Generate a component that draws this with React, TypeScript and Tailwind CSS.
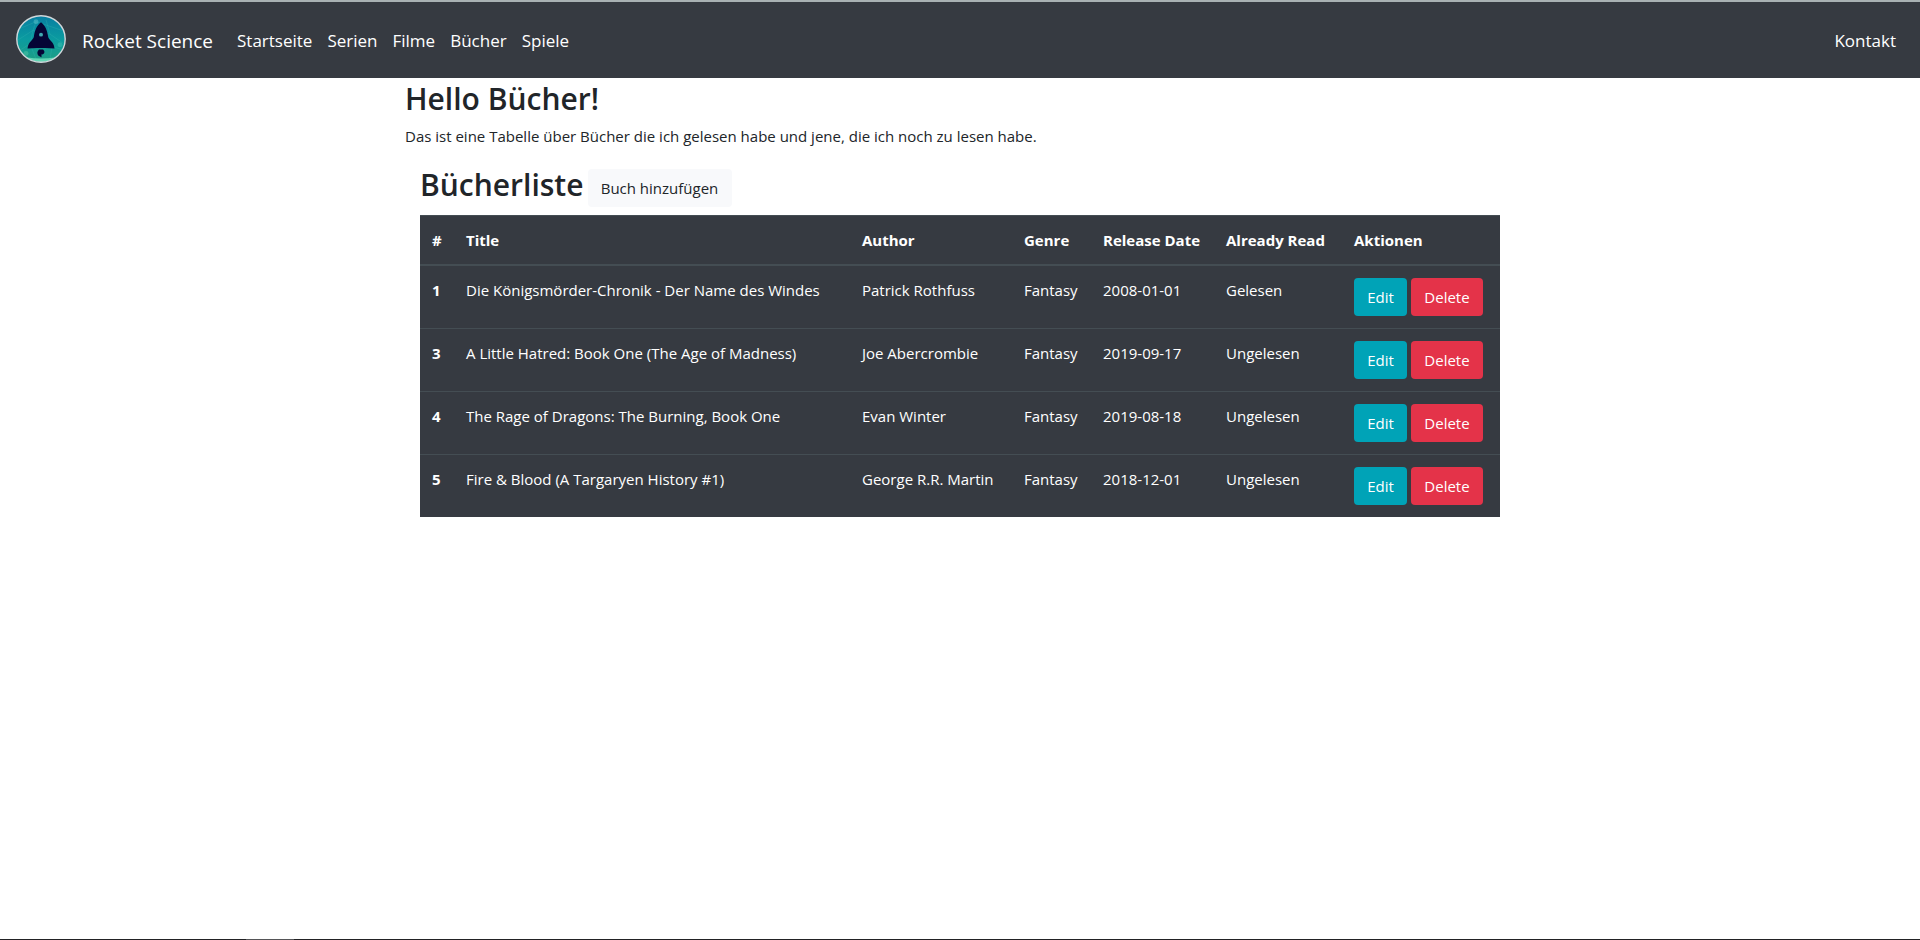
type Book = {
  id: number;
  title: string;
  author: string;
  genre: string;
  released: string;
  status: string;
};

const books: Book[] = [
  { id: 1, title: 'Die Königsmörder-Chronik - Der Name des Windes', author: 'Patrick Rothfuss', genre: 'Fantasy', released: '2008-01-01', status: 'Gelesen' },
  { id: 3, title: 'A Little Hatred: Book One (The Age of Madness)', author: 'Joe Abercrombie', genre: 'Fantasy', released: '2019-09-17', status: 'Ungelesen' },
  { id: 4, title: 'The Rage of Dragons: The Burning, Book One', author: 'Evan Winter', genre: 'Fantasy', released: '2019-08-18', status: 'Ungelesen' },
  { id: 5, title: 'Fire & Blood (A Targaryen History #1)', author: 'George R.R. Martin', genre: 'Fantasy', released: '2018-12-01', status: 'Ungelesen' },
];

const navItems = ['Startseite', 'Serien', 'Filme', 'Bücher', 'Spiele'];

function RocketLogo() {
  return (
    <svg viewBox="0 0 50 50" preserveAspectRatio="none" className="mb-1 h-12 w-[50px]" aria-hidden="true">
      <defs>
        <linearGradient id="sky" x1="0" y1="0" x2="0" y2="1">
          <stop offset="0" stopColor="#087ea2" />
          <stop offset="0.5" stopColor="#0b9ba0" />
          <stop offset="1" stopColor="#1e9f83" />
        </linearGradient>
      </defs>
      <circle cx="25" cy="25" r="24" fill="url(#sky)" />
      <g stroke="#35b5b0" strokeWidth="0.7" opacity="0.45" fill="none">
        <path d="M4 14 L20 7 L46 16 M2 26 L17 16 L34 20 L48 30 M5 36 L14 30 L36 33 L46 36 M20 7 L17 16 L14 30 L20 46 M34 20 L30 5 M36 33 L34 46" />
      </g>
      <circle cx="20" cy="7" r="2.5" fill="#4db9c6" opacity="0.6" />
      <circle cx="10" cy="40" r="2.5" fill="#57c5a8" opacity="0.5" />
      <circle cx="44" cy="31" r="2.5" fill="#3cc0b4" opacity="0.5" />
      <path d="M10 44 Q25 46.5 40 44 Q33 49 25 49 Q17 49 10 44 Z" fill="#62d6b4" />
      <circle cx="25" cy="25" r="24.2" fill="none" stroke="#cfd8dc" strokeWidth="1.4" />
      <path
        d="M25 7.5 C21 10.5 18.5 16.5 18 22 C17.8 24 17 25 15.5 26.5 C13 29 12 31 11.5 35 L21 34.5 H29 L38.5 35 C38 31 37 29 34.5 26.5 C33 25 32.2 24 32 22 C31.5 16.5 29 10.5 25 7.5 Z"
        fill="#050535"
      />
      <circle cx="25" cy="20.5" r="2" fill="#3fa9b0" />
      <path d="M23 36 C21 37.5 20.8 41 22.5 42.5 L25.5 44 L25.5 41 C28.5 41.5 29.5 38 27 36 Z" fill="#050535" />
    </svg>
  );
}

function Navbar() {
  return (
    <nav className="flex h-[78px] items-center border-t-2 border-[#a9b1b3] bg-[#363a41] px-4 pt-0.5 text-[17px] leading-6 text-white">
      <a href="#start" className="mr-6 flex items-center gap-4 text-[19px]">
        <RocketLogo />
        Rocket Science
      </a>
      <ul className="flex grow items-center gap-[15px]">
        {navItems.map((item) => (
          <li key={item}>
            <a href={'#' + item} className="block py-2">{item}</a>
          </li>
        ))}
      </ul>
      <a href="#kontakt" className="p-2">Kontakt</a>
    </nav>
  );
}

function BookTable() {
  return (
    <table className="w-full table-fixed border-separate border-spacing-0 bg-[#363a41] text-left text-white">
      <colgroup>
        <col className="w-[34px]" />
        <col />
        <col className="w-[162px]" />
        <col className="w-[79px]" />
        <col className="w-[123px]" />
        <col className="w-[128px]" />
        <col className="w-[158px]" />
      </colgroup>
      <thead>
        <tr className="*:border-t *:border-b-2 *:border-[#444d53] *:p-3 *:font-bold *:whitespace-nowrap">
          <th scope="col">#</th>
          <th scope="col">Title</th>
          <th scope="col">Author</th>
          <th scope="col">Genre</th>
          <th scope="col">Release Date</th>
          <th scope="col">Already Read</th>
          <th scope="col">Aktionen</th>
        </tr>
      </thead>
      <tbody>
        {books.map((book) => (
          <tr key={book.id} className="*:border-t *:border-[#444d53] *:p-3 *:align-top *:whitespace-nowrap first:*:border-t-0">
            <th scope="row" className="font-bold">{book.id}</th>
            <td>{book.title}</td>
            <td>{book.author}</td>
            <td>{book.genre}</td>
            <td>{book.released}</td>
            <td>{book.status}</td>
            <td>
              <div className="flex gap-1">
                <button type="button" className="h-[38px] w-[53px] rounded bg-[#00a3b7]">Edit</button>
                <button type="button" className="h-[38px] w-[72px] rounded bg-[#e43349]">Delete</button>
              </div>
            </td>
          </tr>
        ))}
      </tbody>
    </table>
  );
}

export default function App() {
  return (
    <div className="flex min-h-screen flex-col bg-white font-['Open_Sans','Noto_Sans',sans-serif] text-[15px] leading-6 text-[#212529]">
      <Navbar />
      <main className="mx-auto w-full max-w-[1140px] grow px-[15px]">
        <h2 className="mb-1 text-[30px] leading-[42px] font-semibold">Hello Bücher!</h2>
        <p className="mb-4">Das ist eine Tabelle über Bücher die ich gelesen habe und jene, die ich noch zu lesen habe.</p>
        <section className="px-[15px]">
          <div className="mb-2 flex items-start gap-1">
            <h2 className="text-[30px] leading-[42px] font-semibold">Bücherliste</h2>
            <button type="button" className="mt-[5px] h-[38px] w-36 rounded bg-[#f8f9fb]">Buch hinzufügen</button>
          </div>
          <BookTable />
        </section>
      </main>
      <footer className="flex h-px bg-[#222224]">
        <div className="ml-[246px] w-12 bg-[#555557]" />
      </footer>
    </div>
  );
}
